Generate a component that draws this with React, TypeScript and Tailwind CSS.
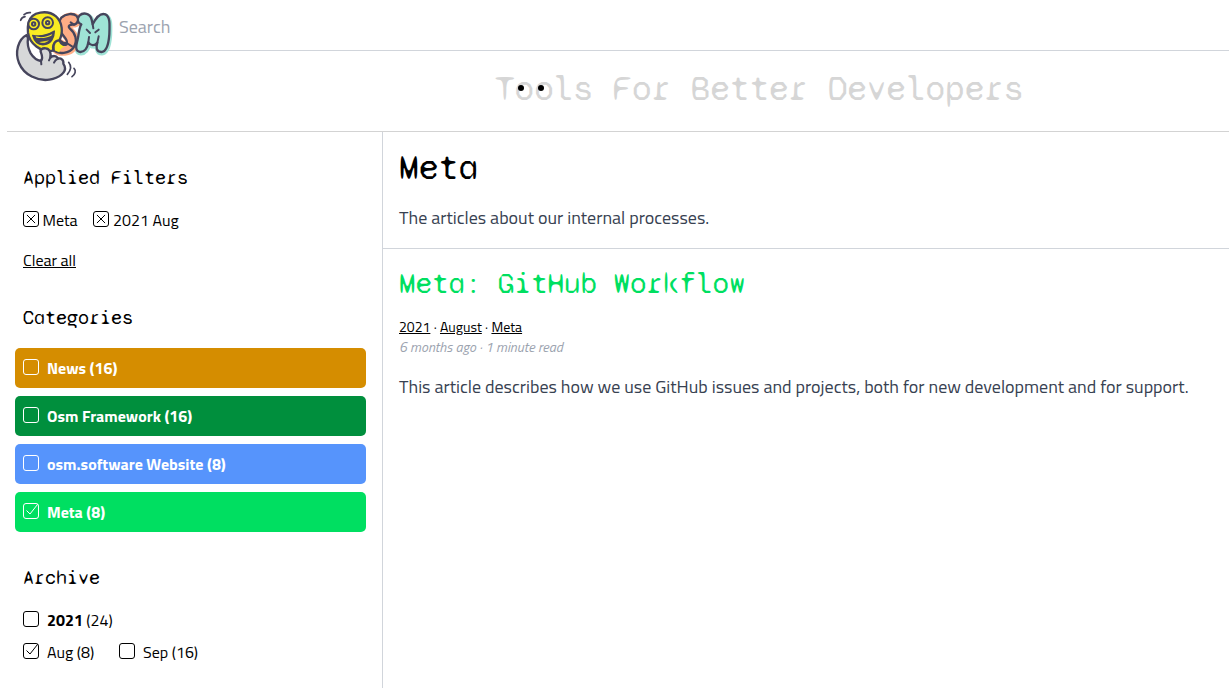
import React from "react";

const ui = "font-['Titillium_Web','Noto_Sans',sans-serif]";
const mono = "font-['Syne_Mono','Liberation_Mono',monospace]";

function Box({ mark }: { mark?: "x" | "check" }) {
  return (
    <svg width="16" height="16" viewBox="0 0 16 16" fill="none" stroke="currentColor" className="block shrink-0">
      <rect x="0.5" y="0.5" width="15" height="15" rx="2.5" />
      {mark === "x" && <path d="M4.2 4.2 11.8 11.8M11.8 4.2 4.2 11.8" strokeLinecap="round" />}
      {mark === "check" && <path d="M3.8 7.8 7 11 14.4 1.6" strokeLinecap="round" />}
    </svg>
  );
}

const letterM =
  "M208 32C221 20 241 26 245 44L248 58C258 38 272 23 286 28C301 34 299 60 298 88C296 116 291 140 274 141C259 141 257 128 262 113C254 124 242 122 235 112C232 130 225 140 211 141C194 140 198 121 203 103C207 86 207 68 214 58C202 54 200 41 208 32Z";
const letterS =
  "M154 38C168 25 190 24 200 33C208 43 204 56 192 59C180 58 172 62 179 70C196 84 204 106 191 127C179 146 144 149 132 136C124 120 134 106 148 106C156 110 160 118 170 114C176 106 160 94 153 82C146 66 145 50 154 38Z";

function Logo() {
  return (
    <svg width="110" height="80" viewBox="0 0 330 240" className="absolute left-[10px] top-[5px]" strokeLinecap="round" strokeLinejoin="round">
      <path d={letterM} transform="translate(2 4)" fill="#9fe3d6" stroke="#9fe3d6" strokeWidth="13" />
      <path d={letterS} transform="translate(3 2)" fill="#ffad86" stroke="#ffad86" strokeWidth="13" />
      <path d={letterM} fill="#9fe3d6" stroke="#46455c" strokeWidth="7" />
      <path d="M240 84 230 74M235 112 237 96M262 113 266 94M256 82 266 74M248 58 250 70" fill="none" stroke="#46455c" strokeWidth="6" />
      <path d={letterS} fill="#ffad86" stroke="#46455c" strokeWidth="7" />
      <path d="M170 114 186 124M192 59 182 52" fill="none" stroke="#46455c" strokeWidth="6" />
      <path d="M56 52C64 18 114 14 138 34C158 52 160 84 148 106C134 109 126 123 130 137C92 144 58 115 54 83C53 70 53 61 56 52Z" fill="#f9ec22" stroke="#46455c" strokeWidth="7" />
      <path d="M147 107C134 106 128 118 133 136L148 142C151 130 158 128 166 122Z" fill="#f9ec22" />
      <path d="M148 106C154 119 162 122 170 118M131 136C127 118 136 105 149 106" fill="none" stroke="#46455c" strokeWidth="7" />
      <circle cx="71" cy="57" r="16" fill="#f9ec22" stroke="#46455c" strokeWidth="6" />
      <circle cx="113" cy="53" r="16" fill="#f9ec22" stroke="#46455c" strokeWidth="6" />
      <circle cx="71" cy="57" r="5" fill="#fff27a" stroke="#46455c" strokeWidth="6" />
      <circle cx="113" cy="53" r="5" fill="#fff27a" stroke="#46455c" strokeWidth="6" />
      <path d="M68 91C91 96 113 90 133 78C133 97 124 116 103 119C84 121 73 109 68 91Z" fill="#46455c" stroke="#46455c" strokeWidth="4" />
      <path d="M77 94C92 99 112 96 127 87L124 92C110 99 93 101 79 98Z" fill="#f9ec22" />
      <path d="M88 111C100 109 110 108 117 105C109 116 94 116 88 111Z" fill="#d7ca2a" />
      <path d="M50 90C24 103 14 142 27 174C42 211 84 229 118 224C148 219 170 202 164 184L160 176C162 164 152 158 144 161C140 150 127 152 121 158C124 143 119 131 107 130C96 129 89 135 93 143C97 153 99 160 93 168C82 166 70 158 62 145C54 130 52 112 54 99Z" fill="#d7d8d9" stroke="#46455c" strokeWidth="7" />
      <path d="M121 158 117 166M144 161C137 164 134 168 132 173M93 168 94 178" fill="none" stroke="#46455c" strokeWidth="6" />
      <path d="M32 46C34 40 39 36 45 35M42 29C48 24 55 22 61 23M176 172C185 183 183 196 172 208M192 190C199 197 196 208 186 215" fill="none" stroke="#46455c" strokeWidth="5" />
    </svg>
  );
}

function Heading({ children }: { children: React.ReactNode }) {
  return <h2 className={`${mono} pl-2 text-xl leading-7 text-black`}>{children}</h2>;
}

const categories = [
  { name: "News (16)", color: "bg-[#d58d00]" },
  { name: "Osm Framework (16)", color: "bg-[#008f3d]" },
  { name: "osm.software Website (8)", color: "bg-[#5694fc]" },
  { name: "Meta (8)", color: "bg-[#00df61]", on: true },
];

export default function App() {
  return (
    <div className={`${ui} h-[695px] w-[1229px] overflow-hidden bg-white text-[16px] leading-6 text-black`}>
      <header className="relative">
        <div className="ml-[105px] flex h-[51px] items-center border-b border-[#d1d5db] pl-[14px]">
          <span className="mt-1 text-[18px] leading-7 text-[#9ca3af]">Search</span>
        </div>
        <Logo />
        <div className="ml-[7px] flex h-[81px] items-center border-b border-[#d3d3d3] pl-[488px]">
          <div className={`${mono} relative mb-1 text-[35.6px] leading-10 text-[#d6d6d6]`}>
            <span>Tools For Better Developers</span>
            <i className="absolute left-[23px] top-[16px] size-[6px] rounded-full bg-black" />
            <i className="absolute left-[43px] top-[16px] size-[6px] rounded-full bg-black" />
          </div>
        </div>
      </header>
      <div className="flex h-[556px]">
        <aside className="ml-[7px] w-[376px] shrink-0 border-r border-[#d1d5db] pl-2 pr-4 pt-8">
          <Heading>Applied Filters</Heading>
          <div className="mt-4 flex gap-[15.4px] pl-2">
            <div className="flex items-start gap-[3.6px]"><div className="pt-[3px]"><Box mark="x" /></div><span>Meta</span></div>
            <div className="flex items-start gap-1"><div className="pt-[3px]"><Box mark="x" /></div><span>2021 Aug</span></div>
          </div>
          <div className="mt-4 pl-2"><span className="underline">Clear all</span></div>
          <div className="mt-8"><Heading>Categories</Heading></div>
          <div className="mt-4 flex flex-col gap-2">
            {categories.map((c) => (
              <div key={c.name} className={`${c.color} flex h-10 items-center gap-2 rounded-[5px] pl-2 font-bold text-white`}>
                <div className="mb-[2px]"><Box mark={c.on ? "check" : undefined} /></div>
                <span>{c.name}</span>
              </div>
            ))}
          </div>
          <div className="mt-8"><Heading>Archive</Heading></div>
          <div className="mt-4 flex items-center gap-2 pl-2">
            <div className="mb-[2px]"><Box /></div>
            <span><b>2021</b> (24)</span>
          </div>
          <div className="mt-2 flex pl-2">
            <div className="flex w-[96px] items-center gap-2"><div className="mb-[2px]"><Box mark="check" /></div><span>Aug (8)</span></div>
            <div className="flex items-center gap-2"><div className="mb-[2px]"><Box /></div><span>Sep (16)</span></div>
          </div>
        </aside>
        <main className="flex-1">
          <section className="h-[117px] border-b border-[#d1d5db] pl-4 pt-4">
            <h1 className={`${mono} text-4xl leading-10`}>Meta</h1>
            <p className="mt-4 text-[18px] leading-7 text-[#374151]">The articles about our internal processes.</p>
          </section>
          <article className="pl-4 pt-4">
            <h2 className={`${mono} text-3xl leading-9 text-[#00df61]`}>Meta: GitHub Workflow</h2>
            <p className="mt-4 text-[14px] leading-5 [word-spacing:0.2px]">
              <span className="underline">2021</span> · <span className="underline">August</span> · <span className="underline">Meta</span>
            </p>
            <p className="text-[14px] italic leading-5 text-[#9ca3af] [word-spacing:0.2px]">6 months ago · 1 minute read</p>
            <p className="mt-4 whitespace-nowrap text-[18px] leading-7 text-[#374151]">This article describes how we use GitHub issues and projects, both for new development and for support.</p>
          </article>
        </main>
      </div>
    </div>
  );
}
